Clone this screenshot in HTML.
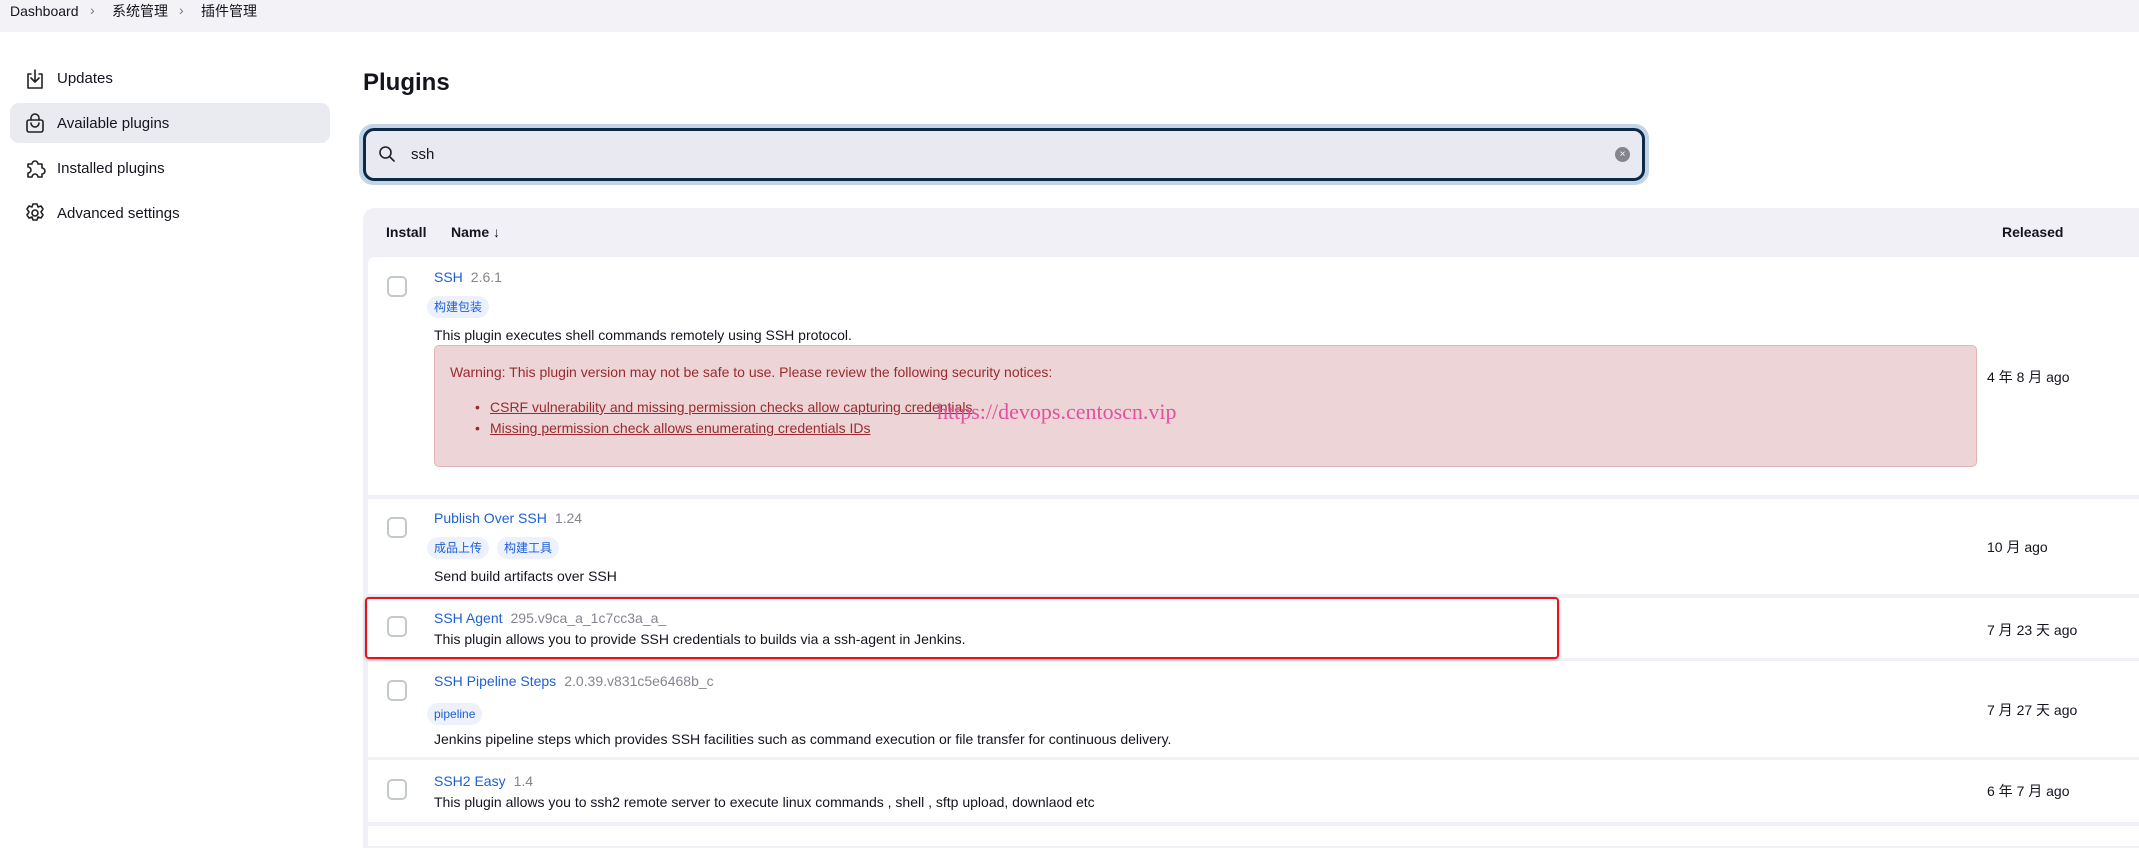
<!DOCTYPE html>
<html><head><meta charset="utf-8">
<style>
*{margin:0;padding:0;box-sizing:border-box}
body{width:2139px;height:826px;overflow:hidden;background:#fff;font-family:"Liberation Sans","Noto Sans CJK SC",sans-serif;color:#14141f;font-size:14px;position:relative}
.a{position:absolute;white-space:nowrap;line-height:1}
.bc{position:absolute;left:0;top:0;width:2139px;height:32px;background:#f2f2f7}
.side{font-size:15px}
.hl{position:absolute;left:10px;top:103px;width:320px;height:40px;background:#eaeaf1;border-radius:9px}
.search-o{position:absolute;left:359px;top:124px;width:1290px;height:61px;border-radius:14px;background:#c3d5e5}
.search-i{position:absolute;left:363px;top:128px;width:1282px;height:53px;border-radius:11px;background:#e9e9f2;border:3px solid #0c2a48}
.tbl{position:absolute;left:363px;top:208px;width:1800px;height:640px;background:#f0f0f6;border-radius:12px 0 0 0}
.row{position:absolute;left:368px;width:1800px;background:#fff}
.cb{position:absolute;left:387px;width:20px;height:21px;border:2px solid #c3c7cf;border-radius:5px;background:#fff}
.t{color:#1c5fd7}
.v{color:#858590;margin-left:8px}
.tag{position:absolute;height:22px;line-height:22px;padding:0 7px;background:#edf1fb;color:#1c5fd7;border-radius:11px;font-size:12px}
.rel{position:absolute;left:1987px;line-height:1}
</style></head><body>
<div class="bc"></div>
<div class="a" style="left:10px;top:4px;font-size:14px">Dashboard</div>
<div class="a" style="left:90px;top:3px;color:#777">&#8250;</div>
<div class="a" style="left:112px;top:4px">系统管理</div>
<div class="a" style="left:179px;top:3px;color:#777">&#8250;</div>
<div class="a" style="left:201px;top:4px">插件管理</div>

<div class="hl"></div>
<svg class="a" style="left:24px;top:68px" width="22" height="22" viewBox="0 0 22 22" fill="none" stroke="#222" stroke-width="1.6" stroke-linecap="round" stroke-linejoin="round"><path d="M7 6H4v14h14V6h-3"/><path d="M11 2v12M7 10l4 4 4-4"/></svg>
<div class="a side" style="left:57px;top:71px">Updates</div>
<svg class="a" style="left:24px;top:112px" width="22" height="22" viewBox="0 0 22 22" fill="none" stroke="#222" stroke-width="1.6" stroke-linecap="round" stroke-linejoin="round"><rect x="3" y="8" width="16" height="12" rx="2"/><path d="M7 8V6a4 4 0 018 0v2"/><path d="M7 11a4 4 0 008 0"/></svg>
<div class="a side" style="left:57px;top:116px">Available plugins</div>
<svg class="a" style="left:24px;top:157px" width="22" height="22" viewBox="0 0 22 22" fill="none" stroke="#222" stroke-width="1.6" stroke-linejoin="round"><path d="M4 7h4a3 3 0 016 0h4v4a3 3 0 010 6v3h-4a3 3 0 00-6 0H4v-4a3 3 0 000-6z"/></svg>
<div class="a side" style="left:57px;top:161px">Installed plugins</div>
<svg class="a" style="left:24px;top:202px" width="22" height="22" viewBox="0 0 22 22" fill="none" stroke="#222" stroke-width="1.6" stroke-linejoin="round"><path d="M9 2h4l1 3 3-1 2 3-2 3 2 3-2 3-3-1-1 3H9l-1-3-3 1-2-3 2-3-2-3 2-3 3 1z"/><circle cx="11" cy="11" r="3"/></svg>
<div class="a side" style="left:57px;top:206px">Advanced settings</div>

<div class="a" style="left:363px;top:71px;font-size:24px;font-weight:bold">Plugins</div>

<div class="search-o"></div>
<div class="search-i"></div>
<svg class="a" style="left:378px;top:145px" width="18" height="18" viewBox="0 0 18 18" fill="none" stroke="#222" stroke-width="1.6" stroke-linecap="round"><circle cx="7.5" cy="7.5" r="5.5"/><path d="M11.5 11.5l4.5 4.5"/></svg>
<div class="a" style="left:411px;top:147px;font-size:15px">ssh</div>
<div class="a" style="left:1615px;top:147px;width:15px;height:15px;border-radius:50%;background:#85858e;color:#fff;font-size:10px;line-height:15px;text-align:center">×</div>

<div class="tbl"></div>
<div class="a" style="left:386px;top:225px;font-weight:bold;font-size:14px">Install</div>
<div class="a" style="left:451px;top:225px;font-weight:bold;font-size:14px">Name ↓</div>
<div class="a" style="left:2002px;top:225px;font-weight:bold;font-size:14px">Released</div>

<div class="row" style="top:257px;height:238px;border-radius:6px 0 0 0"></div>
<div class="row" style="top:499px;height:95px"></div>
<div class="row" style="top:598px;height:60px"></div>
<div class="row" style="top:661px;height:96px"></div>
<div class="row" style="top:760px;height:62px"></div>
<div class="row" style="top:826px;height:20px"></div>

<!-- row1 -->
<div class="cb" style="top:276px"></div>
<div class="a" style="left:434px;top:270px"><span class="t">SSH</span><span class="v">2.6.1</span></div>
<div class="tag" style="left:427px;top:296px">构建包装</div>
<div class="a" style="left:434px;top:328px">This plugin executes shell commands remotely using SSH protocol.</div>
<div class="a" style="left:434px;top:345px;width:1543px;height:122px;background:#edd5d7;border:1px solid #e2b4b8;border-radius:5px"></div>
<div class="a" style="left:450px;top:365px;color:#9a2a2e">Warning: This plugin version may not be safe to use. Please review the following security notices:</div>
<div class="a" style="left:475px;top:400px;color:#9a2a2e">•</div>
<div class="a" style="left:490px;top:400px;color:#9a2a2e;text-decoration:underline">CSRF vulnerability and missing permission checks allow capturing credentials</div>
<div class="a" style="left:475px;top:421px;color:#9a2a2e">•</div>
<div class="a" style="left:490px;top:421px;color:#9a2a2e;text-decoration:underline">Missing permission check allows enumerating credentials IDs</div>
<div class="a" style="left:937px;top:401px;font-family:'Liberation Serif',serif;font-size:22px;color:#e2509e">https://devops.centoscn.vip</div>
<div class="rel" style="top:370px">4 年 8 月 ago</div>

<!-- row2 -->
<div class="cb" style="top:517px"></div>
<div class="a" style="left:434px;top:511px"><span class="t">Publish Over SSH</span><span class="v">1.24</span></div>
<div class="tag" style="left:427px;top:537px">成品上传</div>
<div class="tag" style="left:497px;top:537px">构建工具</div>
<div class="a" style="left:434px;top:569px">Send build artifacts over SSH</div>
<div class="rel" style="top:540px">10 月 ago</div>

<!-- row3 -->
<div class="a" style="left:365px;top:597px;width:1194px;height:62px;border:2px solid #e8121a;border-radius:4px;box-shadow:0 1px 3px rgba(0,0,0,.3)"></div>
<div class="cb" style="top:616px"></div>
<div class="a" style="left:434px;top:611px"><span class="t">SSH Agent</span><span class="v">295.v9ca_a_1c7cc3a_a_</span></div>
<div class="a" style="left:434px;top:632px">This plugin allows you to provide SSH credentials to builds via a ssh-agent in Jenkins.</div>
<div class="rel" style="top:623px">7 月 23 天 ago</div>

<!-- row4 -->
<div class="cb" style="top:680px"></div>
<div class="a" style="left:434px;top:674px"><span class="t">SSH Pipeline Steps</span><span class="v">2.0.39.v831c5e6468b_c</span></div>
<div class="tag" style="left:427px;top:703px">pipeline</div>
<div class="a" style="left:434px;top:732px">Jenkins pipeline steps which provides SSH facilities such as command execution or file transfer for continuous delivery.</div>
<div class="rel" style="top:703px">7 月 27 天 ago</div>

<!-- row5 -->
<div class="cb" style="top:779px"></div>
<div class="a" style="left:434px;top:774px"><span class="t">SSH2 Easy</span><span class="v">1.4</span></div>
<div class="a" style="left:434px;top:795px">This plugin allows you to ssh2 remote server to execute linux commands , shell , sftp upload, downlaod etc</div>
<div class="rel" style="top:784px">6 年 7 月 ago</div>
</body></html>
